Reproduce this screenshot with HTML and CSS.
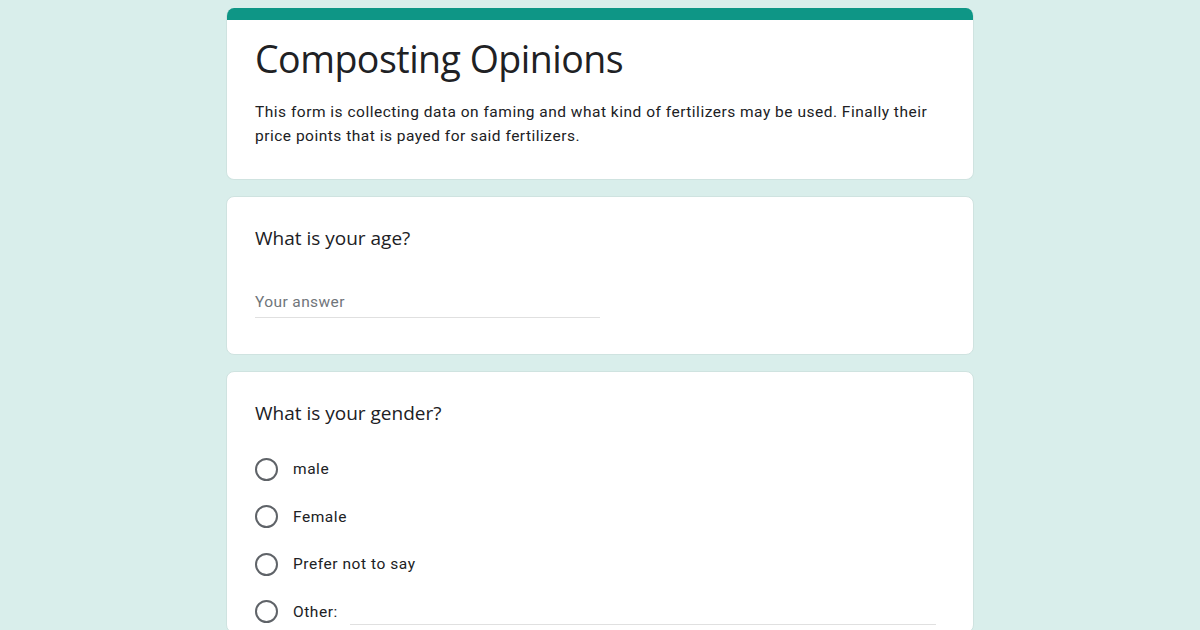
FILE: index.html
```html
<!DOCTYPE html>
<html>
<head>
<meta charset="utf-8">
<link rel="stylesheet" href="styles.css">
</head>
<body>
<div class="form">
  <div class="card header-card">
    <div class="band"></div>
    <div class="header-body">
      <h1 class="title">Composting Opinions</h1>
      <p class="desc">This form is collecting data on faming and what kind of fertilizers may be used. Finally their price points that is payed for said fertilizers.</p>
    </div>
  </div>
  <div class="card q-card age-card">
    <div class="question">What is your age?</div>
    <div class="answer"><span class="placeholder">Your answer</span></div>
  </div>
  <div class="card q-card gender-card">
    <div class="question">What is your gender?</div>
    <div class="options">
      <div class="option"><span class="radio"></span><span class="label">male</span></div>
      <div class="option"><span class="radio"></span><span class="label">Female</span></div>
      <div class="option"><span class="radio"></span><span class="label">Prefer not to say</span></div>
      <div class="option"><span class="radio"></span><span class="label">Other:</span><span class="other-line"></span></div>
    </div>
  </div>
</div>
</body>
</html>
```
FILE: styles.css
```css
html, body { margin: 0; padding: 0; }
body {
  background: #d9eeeb;
  font-family: Roboto, "Liberation Sans", sans-serif;
  color: #202124;
  height: 630px;
  overflow: hidden;
}
.form {
  width: 748px;
  margin: 0 auto;
  padding-top: 8px;
  display: flex;
  flex-direction: column;
  gap: 16px;
}
.card {
  background: #fff;
  border: 1px solid #cfe3e0;
  border-radius: 8px;
  box-sizing: border-box;
  overflow: hidden;
}
.header-card { border-top: none; }
.band {
  height: 12px;
  background: #0e9686;
}
.header-body {
  padding: 13px 28px 31px 28px;
}
.title {
  margin: 0;
  font-family: "Open Sans", Roboto, sans-serif;
  font-weight: 400;
  font-size: 37.5px;
  line-height: 52px;
  letter-spacing: -0.5px;
  color: #202124;
}
.desc {
  margin: 15px 0 0 0;
  font-size: 15.5px;
  line-height: 24px;
  letter-spacing: 0.5px;
  color: #202124;
}
.q-card {
  padding: 26px 28px 0 28px;
}
.age-card { height: 159px; }
.gender-card { height: 262px; }
.question {
  font-family: "Open Sans", Roboto, sans-serif;
  font-size: 19px;
  line-height: 30px;
  letter-spacing: 0;
  color: #202124;
}
.answer {
  margin-top: 38px;
  width: 345px;
  border-bottom: 1px solid #e0e0e0;
  padding-bottom: 4px;
}
.placeholder {
  font-size: 15.5px;
  line-height: 22px;
  color: #70757a;
  letter-spacing: 0.4px;
}
.options {
  margin-top: 29px;
  display: flex;
  flex-direction: column;
  gap: 23.5px;
}
.option {
  display: flex;
  align-items: center;
  height: 24px;
}
.radio {
  width: 19px;
  height: 19px;
  border: 2px solid #5f6368;
  border-radius: 50%;
  flex: none;
}
.label {
  margin-left: 15px;
  font-size: 15.5px;
  color: #202124;
  letter-spacing: 0.55px;
}
.other-line {
  margin-left: 12px;
  margin-right: 9px;
  flex: 1;
  height: 0;
  align-self: flex-end;
  margin-bottom: -1px;
  border-bottom: 1px solid #e0e0e0;
}
```
